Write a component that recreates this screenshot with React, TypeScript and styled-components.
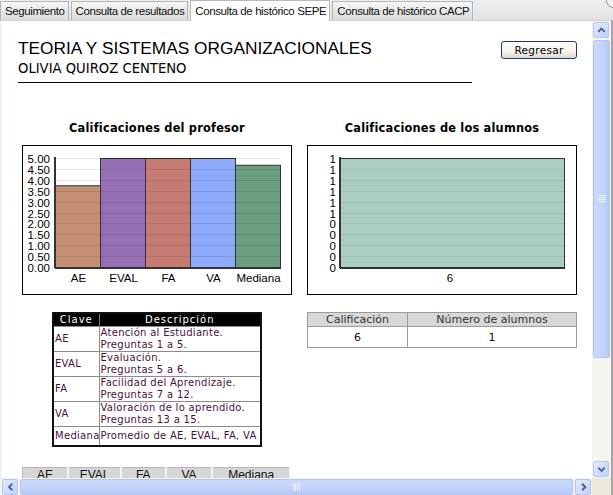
import * as React from "react";
import styled, { createGlobalStyle } from "styled-components";

const GlobalStyle = createGlobalStyle`
  html, body {
    margin: 0;
    padding: 0;
    background: #ffffff;
    overflow: hidden;
  }
  * {
    box-sizing: border-box;
  }
`;

const tabs = [
  "Seguimiento",
  "Consulta de resultados",
  "Consulta de histórico SEPE",
  "Consulta de histórico CACP",
];
const activeTab = 2;

const profesor = [
  { label: "AE", value: 3.75, color: "#c48f72" },
  { label: "EVAL", value: 5, color: "#9670b4" },
  { label: "FA", value: 5, color: "#c57b72" },
  { label: "VA", value: 5, color: "#8eaafa" },
  { label: "Mediana", value: 4.69, color: "#6c9e80" },
];

const legend = [
  { clave: "AE", desc: ["Atención al Estudiante.", "Preguntas 1 a 5."] },
  { clave: "EVAL", desc: ["Evaluación.", "Preguntas 5 a 6."] },
  { clave: "FA", desc: ["Facilidad del Aprendizaje.", "Preguntas 7 a 12."] },
  { clave: "VA", desc: ["Valoración de lo aprendido.", "Preguntas 13 a 15."] },
  { clave: "Mediana", desc: ["Promedio de AE, EVAL, FA, VA"] },
];

const Frame = styled.div`
  width: 613px;
  height: 495px;
  display: flex;
  flex-direction: column;
  overflow: hidden;
  background: #e9e9e9;
`;

const TabBar = styled.div`
  height: 20px;
  display: flex;
  align-items: flex-end;
  background: linear-gradient(#efefef, #e2e2e2);
  position: relative;
  z-index: 1;
`;

const Tab = styled.div<{ $active?: boolean }>`
  height: ${({ $active }) => ($active ? "21px" : "19px")};
  margin-bottom: ${({ $active }) => ($active ? "-1px" : "0")};
  margin-right: 2px;
  padding: 0 3px 0 4px;
  display: flex;
  align-items: center;
  border: 1px solid ${({ $active }) => ($active ? "#b9b9b9" : "#b4b4b4")};
  border-bottom: none;
  background: ${({ $active }) =>
    $active ? "#ffffff" : "linear-gradient(#f6f6f6, #dadada)"};
  font-family: "Liberation Sans", Arial, sans-serif;
  font-size: 11.5px;
  letter-spacing: -0.4px;
  color: #111;
  white-space: nowrap;
`;

const CornerMark = styled.svg`
  margin-left: auto;
  align-self: flex-start;
`;

const Window = styled.div`
  flex: 1;
  display: flex;
  flex-direction: column;
  border-top: 1px solid #d2d2d2;
  border-right: 2px solid #a3a3a3;
  min-height: 0;
`;

const MainRow = styled.div`
  flex: 1;
  display: flex;
  min-height: 0;
`;

const Viewport = styled.div`
  flex: 1;
  overflow: hidden;
  background: #ffffff;
  border-left: 2px solid #eef2fa;
`;

const Content = styled.div`
  padding: 18px 0 0 16px;
`;

const Header = styled.div`
  display: flex;
  align-items: flex-start;
`;

const TitleBlock = styled.div`
  width: 454px;
  padding-bottom: 6px;
  border-bottom: 1px solid #000;
`;

const Title = styled.div`
  font-family: "Liberation Sans", Arial, sans-serif;
  font-size: 17.3px;
  line-height: 19px;
  color: #000;
`;

const Subtitle = styled.div`
  margin-top: 3px;
  font-family: "DejaVu Sans", Verdana, sans-serif;
  font-size: 13.2px;
  line-height: 15px;
  color: #000;
`;

const BackButton = styled.button`
  margin: 2px 0 0 29px;
  width: 76px;
  height: 18px;
  padding: 0;
  border: 1px solid #1c3f70;
  border-radius: 3px;
  background: linear-gradient(#ffffff, #f3f2ec 60%, #dcdad0);
  font-family: "DejaVu Sans", Verdana, sans-serif;
  font-size: 10.5px;
  letter-spacing: 0.3px;
  color: #000;
`;

const Panels = styled.div`
  display: flex;
  gap: 15px;
  margin: 38px 0 0 4px;
`;

const Column = styled.div`
  width: 270px;
  display: flex;
  flex-direction: column;
  align-items: center;
`;

const SectionTitle = styled.div`
  font-family: "DejaVu Sans", Verdana, sans-serif;
  font-weight: bold;
  font-size: 11.4px;
  line-height: 14px;
  letter-spacing: 0.2px;
  color: #000;
  margin-bottom: 10px;
`;

const ChartBox = styled.div`
  width: 270px;
  height: 150px;
  border: 1px solid #000;
  background: #fff;
`;

const LegendTable = styled.table`
  margin-top: 17px;
  width: 208px;
  table-layout: fixed;
  border-collapse: collapse;
  border: 2px solid #111;
  font-family: "DejaVu Sans", Verdana, sans-serif;
  font-size: 10px;
  letter-spacing: 0.3px;
  color: #4a0f3e;
`;

const LegendHead = styled.th<{ $w: number }>`
  width: ${({ $w }) => $w}px;
  height: 13px;
  padding: 0;
  background: #000;
  color: #fff;
  font-weight: normal;
  line-height: 12px;
  letter-spacing: 1px;
  border-right: 1px solid #777;
`;

const LegendCell = styled.td<{ $tall: boolean }>`
  height: ${({ $tall }) => ($tall ? "25px" : "19px")};
  padding: 0 0 0 1px;
  line-height: 12px;
  border: 1px solid #8c8c8c;
  vertical-align: middle;
  white-space: nowrap;
  overflow: hidden;
`;

const CountTable = styled.table`
  margin-top: 17px;
  width: 270px;
  border-collapse: collapse;
  font-family: "DejaVu Sans", Verdana, sans-serif;
  font-size: 11px;
  color: #333;
`;

const CountHead = styled.th<{ $w?: number }>`
  ${({ $w }) => ($w ? `width: ${$w}px;` : "")}
  height: 14px;
  padding: 0;
  background: #d8d8d8;
  border: 1px solid #9a9a9a;
  font-weight: normal;
  line-height: 12px;
`;

const CountCell = styled.td`
  height: 21px;
  padding: 0;
  text-align: center;
  border: 1px solid #9a9a9a;
  color: #111;
`;

const ScoreTable = styled.table`
  margin: 20px 0 0 4px;
  width: 269px;
  border-collapse: collapse;
  font-family: "Liberation Sans", Arial, sans-serif;
  font-size: 12px;
  color: #111;
`;

const ScoreHead = styled.th<{ $w: number }>`
  width: ${({ $w }) => $w}px;
  height: 16px;
  padding: 0;
  background: #d6d6d6;
  border: 1px solid #b8b8b8;
  border-right: 2px solid #f4f4f4;
  font-weight: normal;
`;

const VScroll = styled.div`
  width: 19px;
  display: flex;
  flex-direction: column;
  gap: 2px;
  padding: 1px;
  background: #f5f4ee;
`;

const Track = styled.div`
  flex: 1;
`;

const HScrollRow = styled.div`
  height: 17px;
  display: flex;
`;

const HScroll = styled.div`
  flex: 1;
  display: flex;
  gap: 2px;
  padding: 1px 1px 0 2px;
  background: #f5f4ee;
`;

const ScrollCorner = styled.div`
  width: 19px;
  background: #ece9d8;
`;

const ArrowButton = styled.div`
  width: 16px;
  height: 16px;
  flex: none;
  display: flex;
  align-items: center;
  justify-content: center;
  border: 1px solid #b3c6f2;
  border-radius: 2px;
  background: linear-gradient(135deg, #e3ebfe, #bfd0fa);
`;

const Thumb = styled.div<{ $vertical?: boolean; $size?: number }>`
  ${({ $size, $vertical }) =>
    $size ? `flex: none; ${$vertical ? "height" : "width"}: ${$size}px;` : "flex: 1;"}
  display: flex;
  align-items: center;
  justify-content: center;
  border: 1px solid #b3c6f2;
  border-radius: 2px;
  background: ${({ $vertical }) =>
    $vertical
      ? "linear-gradient(90deg, #cbd9fc, #c2d3fb 60%, #b6c9f6)"
      : "linear-gradient(#cbd9fc, #c2d3fb 60%, #b6c9f6)"};
`;

const Chevron = ({ dir }: { dir: "up" | "down" | "left" | "right" }) => {
  const d = {
    up: "M4 9.5 L7.5 6 L11 9.5",
    down: "M4 6 L7.5 9.5 L11 6",
    left: "M9.5 4 L6 7.5 L9.5 11",
    right: "M6 4 L9.5 7.5 L6 11",
  }[dir];
  return (
    <svg width="14" height="14" viewBox="0 0 14 15">
      <path d={d} fill="none" stroke="#4d6185" strokeWidth="2" />
    </svg>
  );
};

const Grip = ({ vertical }: { vertical?: boolean }) => (
  <svg width={8} height={8}>
    {[0, 2, 4, 6].map((o) =>
      vertical ? (
        <line key={o} x1="0" x2="8" y1={o + 0.5} y2={o + 0.5} stroke="#eef3fe" />
      ) : (
        <line key={o} y1="0" y2="8" x1={o + 0.5} x2={o + 0.5} stroke="#eef3fe" />
      )
    )}
  </svg>
);

const PLOT_TOP = 12;
const PLOT_BOTTOM = 121;
const PLOT_H = PLOT_BOTTOM - PLOT_TOP;

function ProfesorChart() {
  const left = 32;
  const bw = 45;
  const ticks = Array.from({ length: 11 }, (_, i) => i * 0.5);
  return (
    <svg width="268" height="148" fontFamily="Liberation Sans, Arial, sans-serif" fontSize="11.5">
      {profesor.map((b, i) => {
        const h = (b.value / 5) * PLOT_H;
        return (
          <rect
            key={b.label}
            x={left + i * bw + 0.5}
            y={PLOT_BOTTOM - h + 0.5}
            width={bw}
            height={h}
            fill={b.color}
            stroke="#333"
          />
        );
      })}
      {ticks.map((t) => {
        const y = Math.round(PLOT_BOTTOM - (t / 5) * PLOT_H) + 0.5;
        return (
          <g key={t}>
            <line x1={left} x2={left + bw * 5} y1={y} y2={y} stroke="rgba(0,0,0,0.1)" />
            <text x="27" y={y + 4} textAnchor="end" fill="#000">
              {t.toFixed(2)}
            </text>
          </g>
        );
      })}
      <line x1={left} x2={left} y1={PLOT_TOP - 1} y2={PLOT_BOTTOM + 1} stroke="#333" strokeWidth="2" />
      <line x1={left} x2={left + bw * 5 + 1} y1={PLOT_BOTTOM + 1} y2={PLOT_BOTTOM + 1} stroke="#333" strokeWidth="2" />
      {profesor.map((b, i) => (
        <text key={b.label} x={left + i * bw + bw / 2 + 1} y="136" textAnchor="middle" fill="#000">
          {b.label}
        </text>
      ))}
    </svg>
  );
}

function AlumnosChart() {
  const left = 32;
  const right = 256;
  const labels = ["0", "0", "0", "0", "0", "1", "1", "1", "1", "1", "1"];
  return (
    <svg width="268" height="148" fontFamily="Liberation Sans, Arial, sans-serif" fontSize="11.5">
      <rect x={left + 0.5} y={PLOT_TOP + 0.5} width={right - left} height={PLOT_H} fill="#aacfc0" stroke="#333" />
      {labels.map((l, i) => {
        const y = Math.round(PLOT_BOTTOM - (i / 10) * PLOT_H) + 0.5;
        return (
          <g key={i}>
            <line x1={left} x2={right} y1={y} y2={y} stroke="rgba(0,0,0,0.07)" />
            <text x="28" y={y + 4} textAnchor="end" fill="#000">
              {l}
            </text>
          </g>
        );
      })}
      <line x1={left} x2={left} y1={PLOT_TOP - 1} y2={PLOT_BOTTOM + 1} stroke="#333" strokeWidth="2" />
      <line x1={left} x2={right + 1} y1={PLOT_BOTTOM + 1} y2={PLOT_BOTTOM + 1} stroke="#333" strokeWidth="2" />
      <text x="142" y="136" textAnchor="middle" fill="#000">
        6
      </text>
    </svg>
  );
}

export default function App() {
  return (
    <Frame>
      <GlobalStyle />
      <TabBar>
        {tabs.map((t, i) => (
          <Tab key={t} $active={i === activeTab}>
            {t}
          </Tab>
        ))}
        <CornerMark width="10" height="10">
          <circle cx="12" cy="-1" r="9" fill="#f4f4f4" stroke="#8f8f8f" />
        </CornerMark>
      </TabBar>
      <Window>
        <MainRow>
          <Viewport>
            <Content>
              <Header>
                <TitleBlock>
                  <Title>TEORIA Y SISTEMAS ORGANIZACIONALES</Title>
                  <Subtitle>OLIVIA QUIROZ CENTENO</Subtitle>
                </TitleBlock>
                <BackButton>Regresar</BackButton>
              </Header>

              <Panels>
                <Column>
                  <SectionTitle>Calificaciones del profesor</SectionTitle>
                  <ChartBox>
                    <ProfesorChart />
                  </ChartBox>
                  <LegendTable>
                    <thead>
                      <tr>
                        <LegendHead $w={46}>Clave</LegendHead>
                        <LegendHead $w={162}>Descripción</LegendHead>
                      </tr>
                    </thead>
                    <tbody>
                      {legend.map((row) => (
                        <tr key={row.clave}>
                          <LegendCell $tall={row.desc.length > 1}>{row.clave}</LegendCell>
                          <LegendCell $tall={row.desc.length > 1}>
                            {row.desc.map((line) => (
                              <div key={line}>{line}</div>
                            ))}
                          </LegendCell>
                        </tr>
                      ))}
                    </tbody>
                  </LegendTable>
                </Column>

                <Column>
                  <SectionTitle>Calificaciones de los alumnos</SectionTitle>
                  <ChartBox>
                    <AlumnosChart />
                  </ChartBox>
                  <CountTable>
                    <thead>
                      <tr>
                        <CountHead $w={100}>Calificación</CountHead>
                        <CountHead>Número de alumnos</CountHead>
                      </tr>
                    </thead>
                    <tbody>
                      <tr>
                        <CountCell>6</CountCell>
                        <CountCell>1</CountCell>
                      </tr>
                    </tbody>
                  </CountTable>
                </Column>
              </Panels>

              <ScoreTable>
                <thead>
                  <tr>
                    <ScoreHead $w={46}>AE</ScoreHead>
                    <ScoreHead $w={53}>EVAL</ScoreHead>
                    <ScoreHead $w={45}>FA</ScoreHead>
                    <ScoreHead $w={47}>VA</ScoreHead>
                    <ScoreHead $w={78}>Mediana</ScoreHead>
                  </tr>
                </thead>
              </ScoreTable>
            </Content>
          </Viewport>
          <VScroll>
            <ArrowButton>
              <Chevron dir="up" />
            </ArrowButton>
            <Thumb $vertical $size={318}>
              <Grip vertical />
            </Thumb>
            <Track />
            <ArrowButton>
              <Chevron dir="down" />
            </ArrowButton>
          </VScroll>
        </MainRow>
        <HScrollRow>
          <HScroll>
            <ArrowButton>
              <Chevron dir="left" />
            </ArrowButton>
            <Thumb>
              <Grip />
            </Thumb>
            <ArrowButton>
              <Chevron dir="right" />
            </ArrowButton>
          </HScroll>
          <ScrollCorner />
        </HScrollRow>
      </Window>
    </Frame>
  );
}
